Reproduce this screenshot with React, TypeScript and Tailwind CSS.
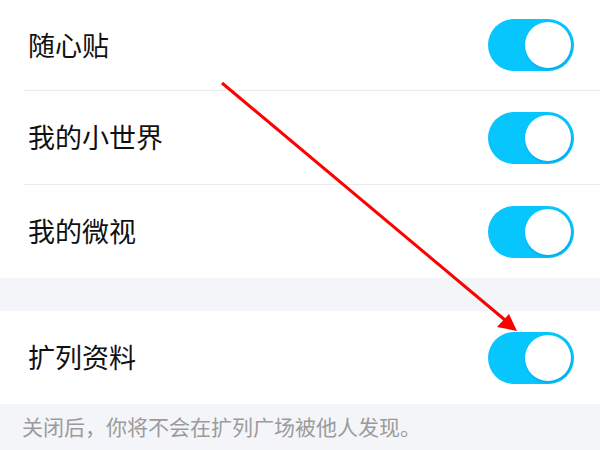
import React from 'react';

const Toggle = () => (
    <div className="relative h-[52px] w-[86px] shrink-0 rounded-full bg-[#06c6fd]">
        <div className="absolute right-[3px] top-[3px] h-[46px] w-[46px] rounded-full bg-white shadow-[1px_2px_3px_rgba(0,120,200,0.35)]" />
    </div>
);

const Row = ({ label, h, border = true }: { label: string; h: string; border?: boolean }) => (
    <div className={`flex items-center bg-white pl-6 ${h}`}>
        <div className={`flex h-full flex-1 items-center justify-between pr-[26px] ${border ? 'border-b border-[#ebebeb]' : ''}`}>
            <span className="pl-1 text-[27px] text-[#111]">{label}</span>
            <Toggle />
        </div>
    </div>
);

export default function App() {
    return (
        <div
            className="relative h-[450px] w-[600px] overflow-hidden bg-[#f4f5f8]"
            style={{ fontFamily: '"Noto Sans CJK SC", "Noto Sans", sans-serif' }}
        >
            <Row label="随心贴" h="h-[91px]" />
            <Row label="我的小世界" h="h-[94px]" />
            <Row label="我的微视" h="h-[93px]" border={false} />
            <div className="h-[33px]" />
            <Row label="扩列资料" h="h-[93px]" border={false} />
            <p className="pl-[22px] pt-[7px] text-[21px] text-[#9b9b9b]">关闭后，你将不会在扩列广场被他人发现。</p>

            <svg className="pointer-events-none absolute left-0 top-0" width="600" height="450">
                <line x1="222" y1="83" x2="505" y2="320" stroke="#ff0000" strokeWidth="3" />
                <polygon points="517,331 497,327 509,314" fill="#ff0000" />
            </svg>
        </div>
    );
}
